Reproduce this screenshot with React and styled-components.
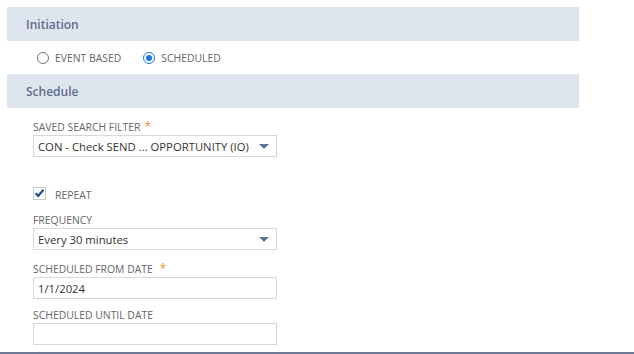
import React from 'react';
import styled, { createGlobalStyle } from 'styled-components';

const Global = createGlobalStyle`
    html, body {
        margin: 0;
        padding: 0;
        background: #ffffff;
        font-family: "Open Sans", "Noto Sans", sans-serif;
    }
`;

const Page = styled.div`
    width: 634px;
    height: 354px;
    position: relative;
    padding-top: 7px;
    box-sizing: border-box;
    overflow: hidden;
    border-bottom: 2px solid #6f7b96;
`;

const SectionHeader = styled.div`
    margin-left: 7px;
    width: 572px;
    height: 34px;
    background: #dfe5ef;
    display: flex;
    align-items: center;
    padding-left: 19px;
    box-sizing: border-box;
    font-size: 12px;
    font-weight: 600;
    color: #5f6e8c;
`;

const RadioRow = styled.div`
    height: 33px;
    display: flex;
    align-items: center;
    padding-left: 37px;
`;

const RadioOption = styled.label`
    display: flex;
    align-items: center;
    gap: 6px;
    margin-right: ${p => p.$gap || 0}px;
    font-size: 10.4px;
    color: #666;
    text-transform: uppercase;
`;

const RadioDot = styled.span`
    width: 12px;
    height: 12px;
    border-radius: 50%;
    box-sizing: border-box;
    border: 1px solid ${p => (p.$on ? '#1a73e8' : '#767676')};
    display: flex;
    align-items: center;
    justify-content: center;
    &::after {
        content: '';
        width: 6px;
        height: 6px;
        border-radius: 50%;
        background: ${p => (p.$on ? '#1a73e8' : 'transparent')};
    }
`;

const Form = styled.div`
    padding-left: 33px;
    display: flex;
    flex-direction: column;
`;

const Field = styled.div`
    margin-top: ${p => p.$top}px;
    display: flex;
    flex-direction: column;
`;

const Label = styled.div`
    font-size: 10.4px;
    line-height: 13px;
    color: #666;
    text-transform: uppercase;
    margin-bottom: 1px;
`;

const Required = styled.span`
    color: #e39b2c;
    margin-left: ${p => p.$gap || 4}px;
    font-size: 12px;
`;

const Box = styled.div`
    width: 244px;
    height: 22px;
    box-sizing: border-box;
    border: 1px solid #d8d8d8;
    display: flex;
    align-items: center;
    justify-content: space-between;
    padding: 0 6px 0 4px;
    font-size: 11.3px;
    white-space: nowrap;
    color: #333;
    background: #fff;
`;

const Arrow = styled.span`
    width: 0;
    height: 0;
    border-left: 5px solid transparent;
    border-right: 5px solid transparent;
    border-top: 5px solid #5a7398;
    margin-right: 1px;
`;

const CheckRow = styled.label`
    margin-top: 27px;
    display: flex;
    align-items: center;
    gap: 9px;
    font-size: 10.4px;
    color: #666;
    text-transform: uppercase;
`;

const CheckText = styled.span`
    padding-top: 4px;
`;

const CheckBox = styled.span`
    width: 13px;
    height: 13px;
    box-sizing: border-box;
    border: 1px solid #c9c9c9;
    display: flex;
    align-items: center;
    justify-content: center;
`;

const SelectField = ({ value }) => (
    <Box>
        <span>{value}</span>
        <Arrow />
    </Box>
);

const App = () => {
    return (
        <Page>
            <Global />
            <SectionHeader>Initiation</SectionHeader>
            <RadioRow>
                <RadioOption $gap={22}>
                    <RadioDot />
                    Event Based
                </RadioOption>
                <RadioOption>
                    <RadioDot $on />
                    Scheduled
                </RadioOption>
            </RadioRow>
            <SectionHeader>Schedule</SectionHeader>
            <Form>
                <Field $top={12}>
                    <Label>Saved Search Filter<Required>*</Required></Label>
                    <SelectField value="CON - Check SEND ... OPPORTUNITY (IO)" />
                </Field>
                <CheckRow>
                    <CheckBox>
                        <svg width="11" height="10" viewBox="0 0 11 10">
                            <path d="M1.5 5.2 L4.2 7.8 L9.5 1.8" fill="none" stroke="#1f4f8f" strokeWidth="2.2" />
                        </svg>
                    </CheckBox>
                    <CheckText>Repeat</CheckText>
                </CheckRow>
                <Field $top={12}>
                    <Label>Frequency</Label>
                    <SelectField value="Every 30 minutes" />
                </Field>
                <Field $top={12}>
                    <Label>Scheduled From Date<Required $gap={7}>*</Required></Label>
                    <Box>1/1/2024</Box>
                </Field>
                <Field $top={10}>
                    <Label>Scheduled Until Date</Label>
                    <Box />
                </Field>
            </Form>
        </Page>
    );
};

export default App;
